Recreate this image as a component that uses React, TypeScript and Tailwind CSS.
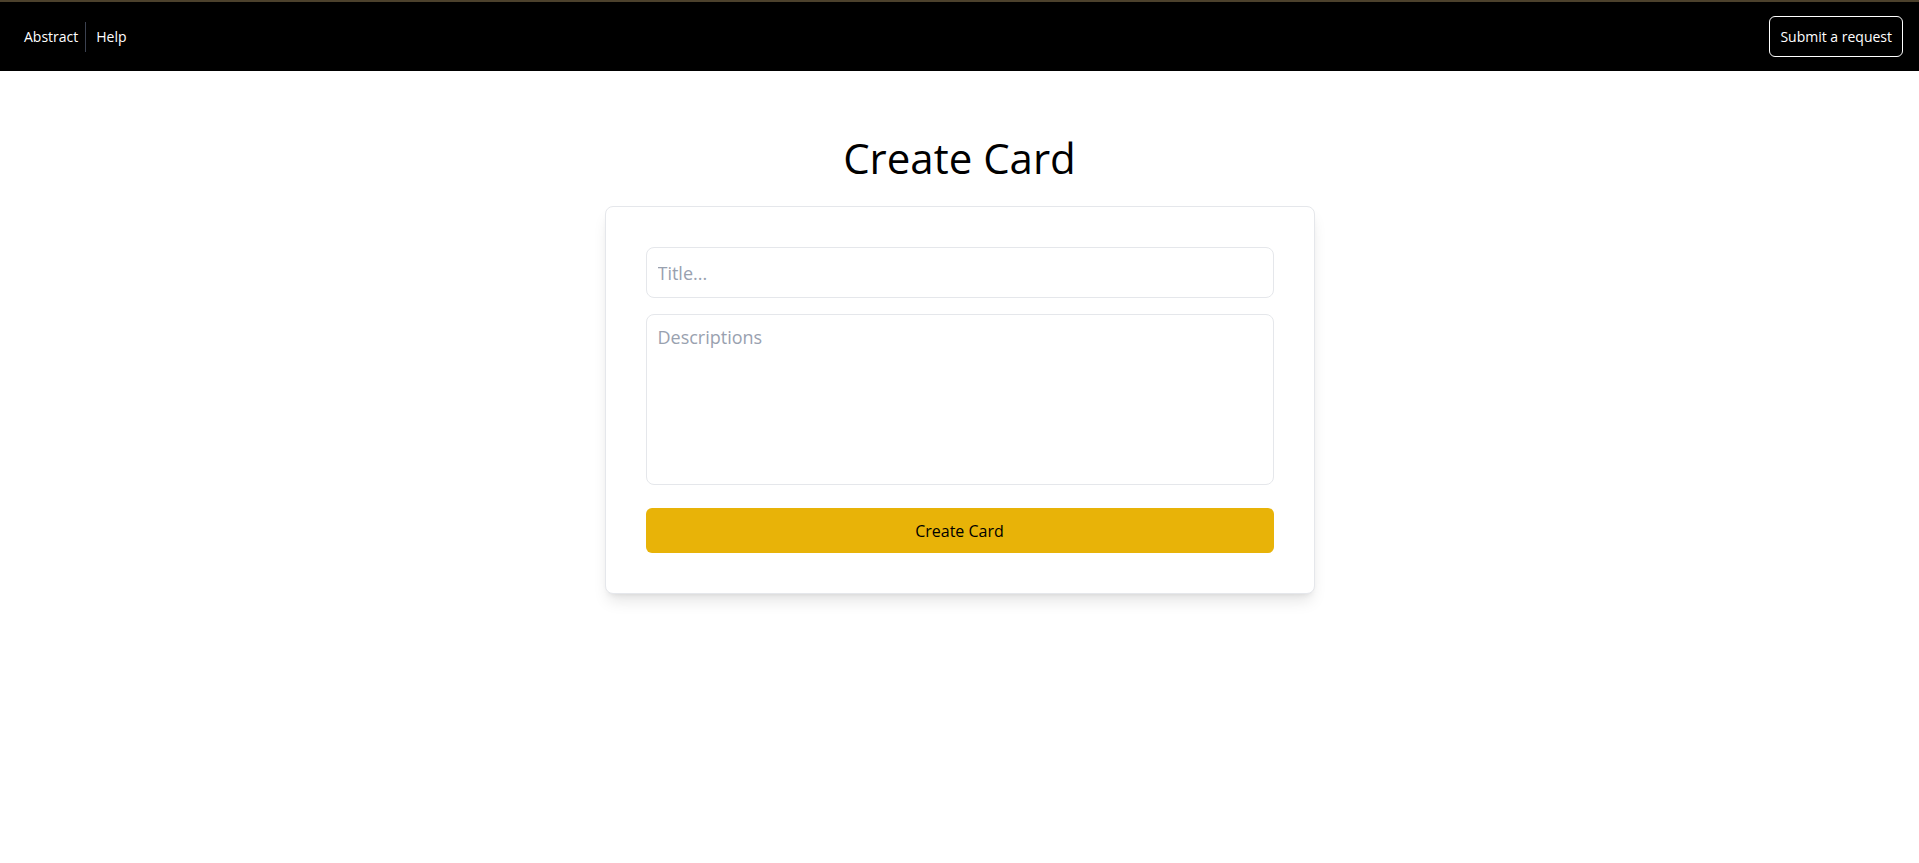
import { useState } from 'react';

export default function App() {
  const [title, setTitle] = useState('');
  const [desc, setDesc] = useState('');

  return (
    <div
      className="h-screen overflow-y-scroll bg-white [&::-webkit-scrollbar]:w-[20px] [&::-webkit-scrollbar-track]:bg-[#f0f0f0] [&::-webkit-scrollbar-thumb]:border-l-[2px] [&::-webkit-scrollbar-thumb]:border-r-[1px] [&::-webkit-scrollbar-thumb]:border-solid [&::-webkit-scrollbar-thumb]:border-[#f0f0f0] [&::-webkit-scrollbar-thumb]:bg-[#bdbdbd] [&::-webkit-scrollbar-button]:block [&::-webkit-scrollbar-button]:h-[14px] [&::-webkit-scrollbar-button]:bg-[#f0f0f0]"
      style={{ fontFamily: '"Open Sans", "Noto Sans", sans-serif' }}
    >
      <div className="min-h-[2300px]">
        <div className="h-[2px] bg-[#4c412c]" />
        <header className="flex h-[69px] items-center justify-between bg-black px-[24px] text-white">
          <nav className="flex items-center text-[14px]">
            <a href="#" className="pr-[7px]">Abstract</a>
            <span className="h-[30px] w-px bg-[#3b4150]" />
            <a href="#" className="pl-[10px]">Help</a>
          </nav>
          <button className="-mr-[8px] h-[41px] rounded-md border border-white px-[10px] text-[14px] text-white">
            Submit a request
          </button>
        </header>

        <main className="flex flex-col items-center pt-[63px]">
          <h1 className="mb-[24px] text-[42px] leading-[48px] text-black">Create Card</h1>
          <form
            onSubmit={e => e.preventDefault()}
            className="flex w-[710px] flex-col rounded-lg border border-gray-200 bg-white p-[40px] shadow-lg"
          >
            <input
              type="text"
              value={title}
              onChange={e => setTitle(e.target.value)}
              placeholder="Title..."
              className="h-[51px] rounded-lg border border-gray-200 px-[11px] text-[18px] outline-none placeholder:text-gray-400"
            />
            <textarea
              value={desc}
              onChange={e => setDesc(e.target.value)}
              placeholder="Descriptions"
              className="mt-[16px] h-[171px] resize-none rounded-lg border border-gray-200 px-[11px] py-[9px] text-[18px] outline-none placeholder:text-gray-400"
            />
            <button
              type="submit"
              className="mt-[23px] h-[45px] rounded-md bg-[#e8b308] text-[16px] font-medium text-black"
            >
              Create Card
            </button>
          </form>
        </main>
      </div>
    </div>
  );
}
